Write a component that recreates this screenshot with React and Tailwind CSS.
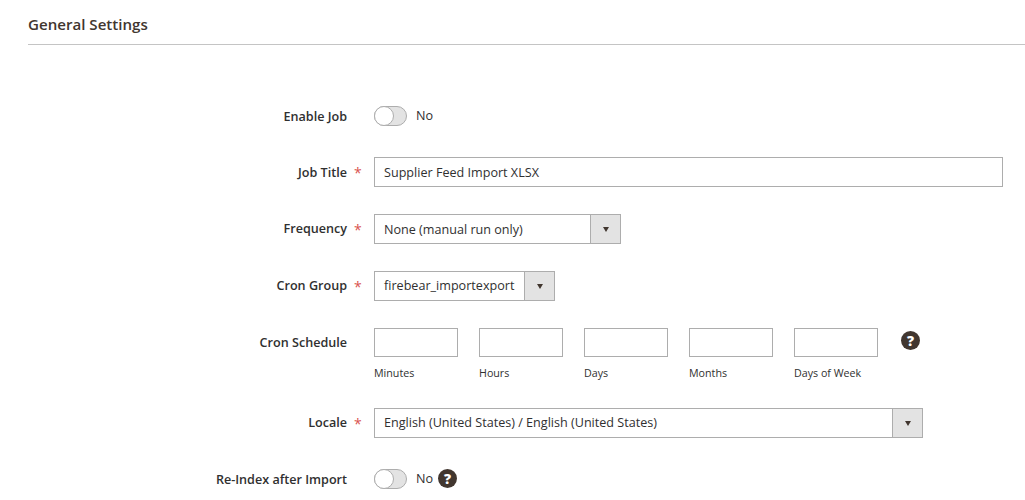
const font = "font-['Open_Sans',sans-serif]"

function HelpIcon({ className = '' }) {
  return (
    <span className={`flex w-[19px] h-[19px] rounded-full bg-[#41362f] items-center justify-center text-white text-[14px] leading-none font-extrabold ${className}`}>
      ?
    </span>
  )
}

function Row({ label, required, children, className = '', labelClass = 'pt-[2px] leading-[28px]' }) {
  return (
    <div className={`flex items-start ${className}`}>
      <div className={`w-[319px] shrink-0 text-right text-[12.6px] font-semibold text-[#303030] ${labelClass}`}>{label}</div>
      <div className="w-[27px] shrink-0 pt-[2px] pl-[7px] text-[14px] leading-[28px] text-[#d9534f]">{required ? '*' : ''}</div>
      {children}
    </div>
  )
}

function Toggle() {
  return (
    <div className="flex items-center h-[30px]">
      <span className="relative block w-[33px] h-[20px] rounded-full bg-[#e3e3e3] border border-[#adadad]">
        <span className="absolute left-[-1px] top-[-1px] w-[20px] h-[20px] rounded-full bg-white border border-[#adadad]" />
      </span>
    </div>
  )
}

function Select({ value, width, textClass = 'leading-[28px]' }) {
  return (
    <div className={`flex h-[30px] border border-[#adadad] bg-white ${width}`}>
      <span className={`flex-1 pl-[9px] text-[12.6px] text-[#303030] whitespace-nowrap ${textClass}`}>{value}</span>
      <span className="flex w-[30px] items-center justify-center bg-[#e3e3e3] border-l border-[#adadad]">
        <span className="w-0 h-0 border-l-[3.5px] border-r-[3.5px] border-t-[5px] border-l-transparent border-r-transparent border-t-[#41362f]" />
      </span>
    </div>
  )
}

function CronField({ label }) {
  return (
    <div className="w-[84px] mr-[21px] shrink-0">
      <div className="h-[29px] border border-[#adadad] bg-white" />
      <div className="mt-[9px] text-[10.7px] leading-[15px] text-[#303030] whitespace-nowrap">{label}</div>
    </div>
  )
}

export default function App() {
  return (
    <div className={`w-[1025px] h-[500px] overflow-hidden bg-white ${font}`}>
      <div className="ml-[28px] h-[45px] border-b border-[#c4c4c4] pt-[14px]">
        <h2 className="text-[15.1px] leading-[21px] font-semibold text-[#41362f]">General Settings</h2>
      </div>

      <div className="ml-[28px] pt-[56px]">
        <Row label="Enable Job">
          <Toggle />
          <span className="ml-[9px] text-[12.6px] leading-[30px] text-[#303030]">No</span>
        </Row>

        <Row label="Job Title" required className="mt-[26px]">
          <div className="w-[629px] h-[30px] border border-[#adadad] pl-[9px] text-[12.6px] leading-[30px] text-[#303030]">
            Supplier Feed Import XLSX
          </div>
        </Row>

        <Row label="Frequency" required labelClass="pt-px leading-[28px]" className="mt-[27px]">
          <Select value="None (manual run only)" width="w-[247px]" textClass="leading-[30px]" />
        </Row>

        <Row label="Cron Group" required labelClass="pt-px leading-[28px]" className="mt-[27px]">
          <Select value="firebear_importexport" width="w-[181px]" />
        </Row>

        <Row label="Cron Schedule" labelClass="pt-px leading-[28px]" className="mt-[27px]">
          <CronField label="Minutes" />
          <CronField label="Hours" />
          <CronField label="Days" />
          <CronField label="Months" />
          <CronField label="Days of Week" />
          <HelpIcon className="ml-[2px] mt-[3px]" />
        </Row>

        <Row label="Locale" required labelClass="pt-px leading-[28px]" className="mt-[27px]">
          <Select value="English (United States) / English (United States)" width="w-[549px]" />
        </Row>

        <Row label="Re-Index after Import" className="mt-[26px]">
          <Toggle />
          <span className="ml-[9px] text-[12.6px] leading-[30px] text-[#303030]">No</span>
          <HelpIcon className="ml-[5px] mt-[5px]" />
        </Row>
      </div>
    </div>
  )
}
